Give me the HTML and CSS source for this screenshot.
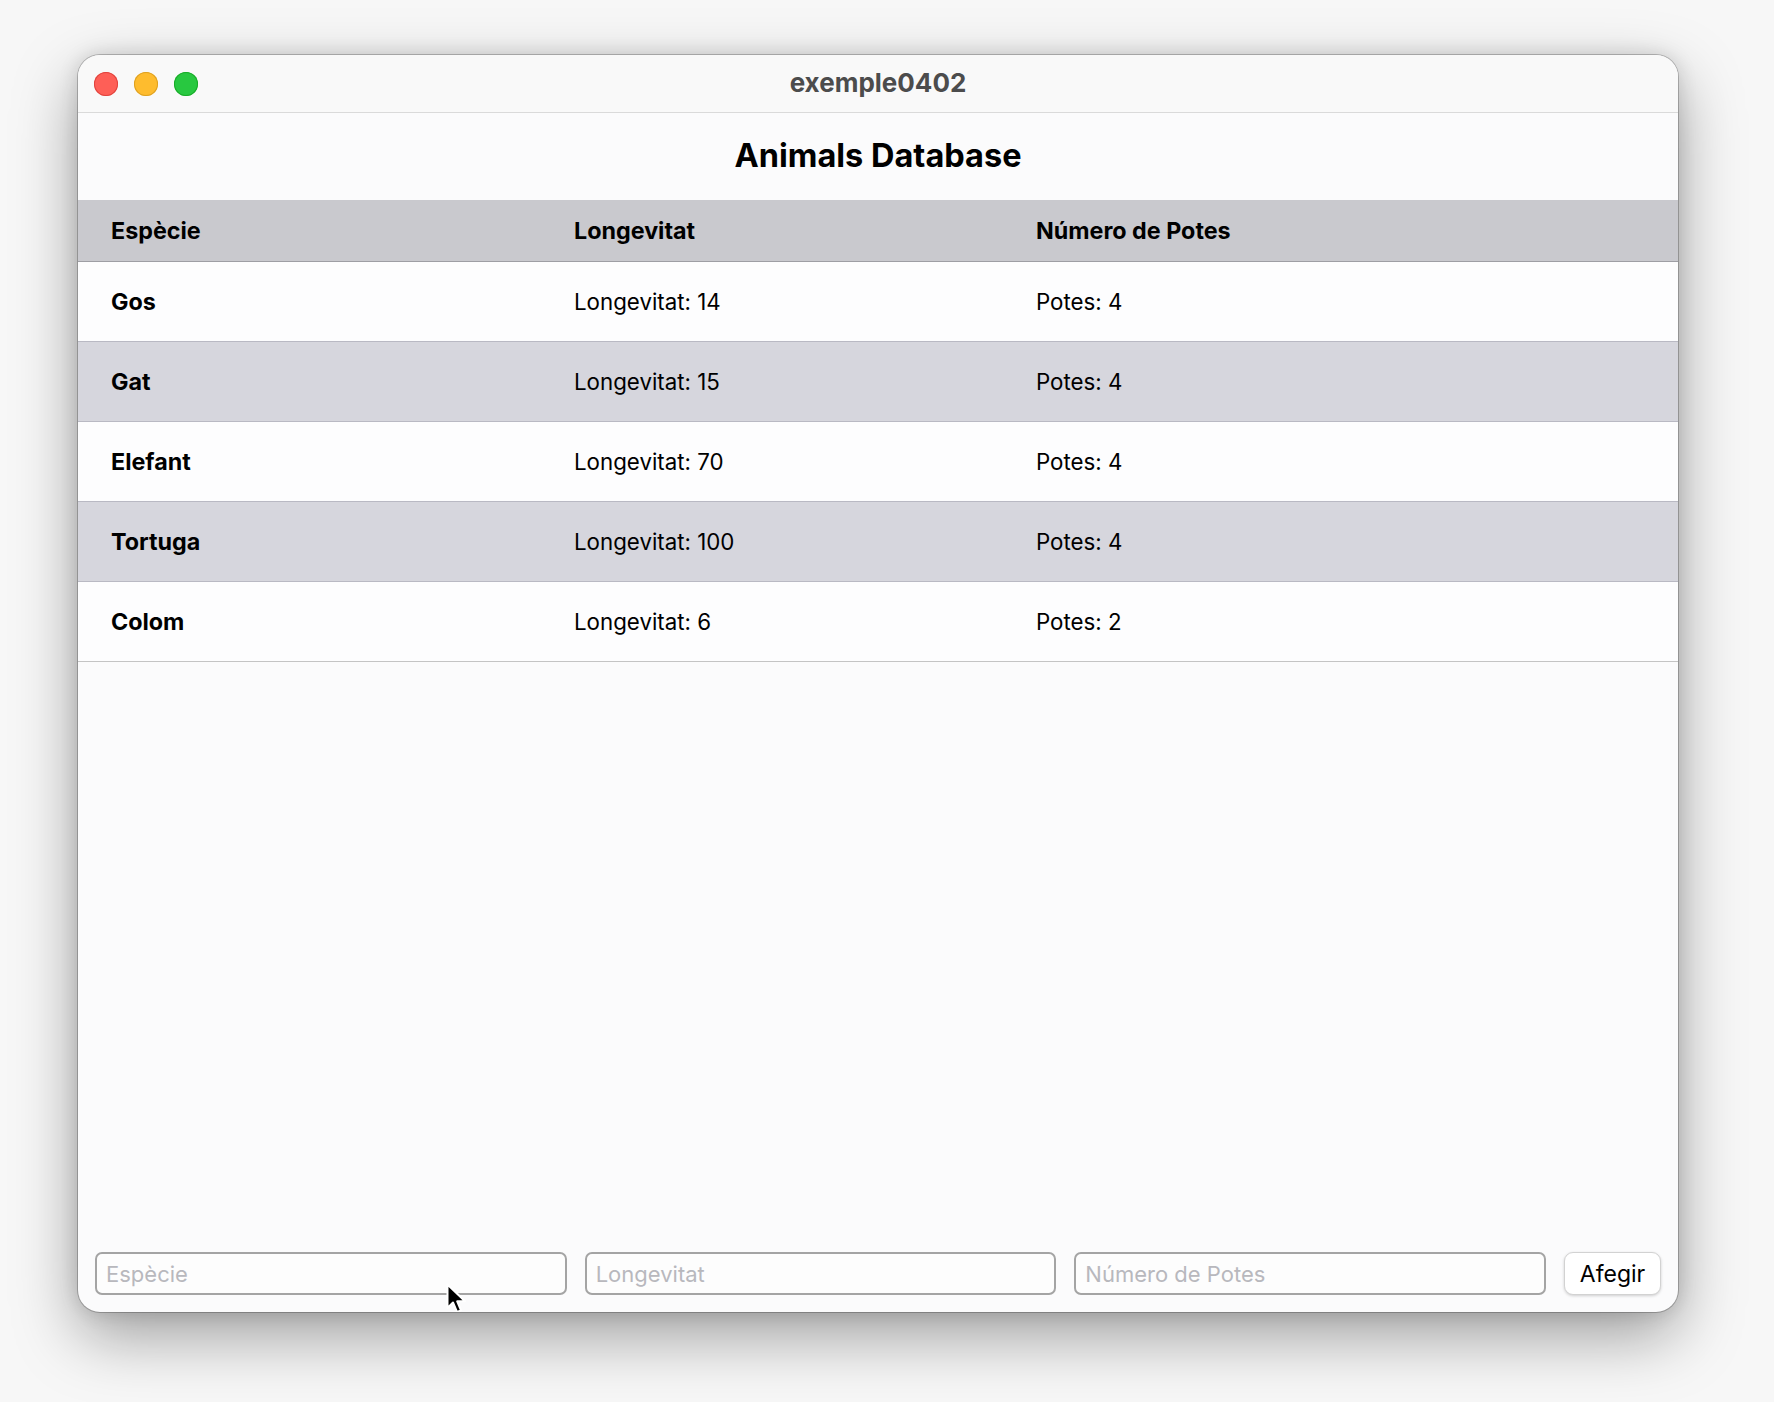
FILE: index.html
```html
<!DOCTYPE html>
<html lang="ca">
<head>
<meta charset="utf-8">
<title>exemple0402</title>
<link rel="stylesheet" href="styles.css">
</head>
<body>
<div class="window">
  <div class="titlebar">
    <div class="lights">
      <span class="light red"></span>
      <span class="light yellow"></span>
      <span class="light green"></span>
    </div>
    <div class="wtitle">exemple0402</div>
    <div></div>
  </div>
  <h1 class="apptitle">Animals Database</h1>
  <div class="table">
    <div class="row head">
      <div class="cell">Espècie</div>
      <div class="cell">Longevitat</div>
      <div class="cell">Número de Potes</div>
    </div>
    <div class="row">
      <div class="cell name">Gos</div>
      <div class="cell">Longevitat: 14</div>
      <div class="cell">Potes: 4</div>
    </div>
    <div class="row alt">
      <div class="cell name">Gat</div>
      <div class="cell">Longevitat: 15</div>
      <div class="cell">Potes: 4</div>
    </div>
    <div class="row">
      <div class="cell name">Elefant</div>
      <div class="cell">Longevitat: 70</div>
      <div class="cell">Potes: 4</div>
    </div>
    <div class="row alt">
      <div class="cell name">Tortuga</div>
      <div class="cell">Longevitat: 100</div>
      <div class="cell">Potes: 4</div>
    </div>
    <div class="row last">
      <div class="cell name">Colom</div>
      <div class="cell">Longevitat: 6</div>
      <div class="cell">Potes: 2</div>
    </div>
  </div>
  <div class="spacer"></div>
  <div class="form">
    <input class="field" type="text" placeholder="Espècie">
    <input class="field" type="text" placeholder="Longevitat">
    <input class="field" type="text" placeholder="Número de Potes">
    <button class="btn" type="button">Afegir</button>
  </div>
  <svg class="cursor" width="22" height="34" viewBox="0 0 22 34">
    <path d="M1.5 1.5 L1.5 25 L7 19.5 L11 29 L15 27.3 L11.2 18.3 L19 18.3 Z" fill="#000" stroke="#fff" stroke-width="2" stroke-linejoin="round"/>
  </svg>
</div>
</body>
</html>
```

FILE: styles.css
```css
* { box-sizing: border-box; }
html, body { margin: 0; padding: 0; }
body {
  background: #f7f7f7;
  font-family: Inter, "Noto Sans", "Liberation Sans", sans-serif;
  color: #000;
  width: 1774px;
  height: 1402px;
  overflow: hidden;
}
.window {
  position: relative;
  width: 1600px;
  height: 1257px;
  margin: 55px 0 0 78px;
  border-radius: 22px;
  background: #fbfbfc;
  box-shadow: 0 0 0 1px rgba(0,0,0,0.22), 0 24px 64px rgba(0,0,0,0.36), 0 0 20px rgba(0,0,0,0.14);
  display: flex;
  flex-direction: column;
  overflow: hidden;
}
.titlebar {
  height: 58px;
  flex: none;
  border-bottom: 1px solid #dadada;
  display: grid;
  grid-template-columns: 1fr auto 1fr;
  align-items: center;
  background: #f9f9f9;
}
.lights {
  display: flex;
  gap: 16px;
  padding-left: 16px;
}
.light {
  width: 24px;
  height: 24px;
  border-radius: 50%;
  display: block;
}
.red { background: #fe5f57; box-shadow: inset 0 0 0 1px #e0443e; }
.yellow { background: #febc2e; box-shadow: inset 0 0 0 1px #dea123; }
.green { background: #28c840; box-shadow: inset 0 0 0 1px #1aab29; }
.wtitle {
  font-size: 26px;
  font-weight: 700;
  color: #4c4c4c;
  padding-bottom: 2px;
}
.apptitle {
  margin: 0;
  height: 87px;
  flex: none;
  display: flex;
  align-items: center;
  justify-content: center;
  font-size: 32.5px;
  font-weight: 700;
  padding-bottom: 2px;
}
.table {
  flex: none;
  display: flex;
  flex-direction: column;
}
.row {
  display: grid;
  grid-template-columns: 462px 462px 1fr;
  padding-left: 33px;
  height: 80px;
  align-items: center;
  border-bottom: 1px solid #b9b9c3;
  background: #fdfdfe;
  font-size: 22.3px;
}
.row.head {
  height: 62px;
  background: #c9c9ce;
  border-bottom: 1px solid #9e9ea4;
  font-weight: 700;
  font-size: 23.3px;
}
.row.alt { background: #d6d6dd; }
.row.last { border-bottom-color: #c4c4c4; }
.cell.name { font-weight: 700; font-size: 23.3px; }
.row .cell:not(:first-child) { padding-left: 1px; }
.spacer { flex: 1; }
.form {
  flex: none;
  display: flex;
  gap: 18px;
  padding: 0 17px 17px 17px;
  align-items: center;
}
.field {
  flex: 1;
  height: 43px;
  border: 2px solid #a4a4a4;
  border-radius: 7px;
  background: #fdfdfd;
  font-family: Inter, "Noto Sans", "Liberation Sans", sans-serif;
  font-size: 22px;
  padding: 0 9px;
  color: #000;
  outline: none;
}
.field::placeholder { color: #b8b8bd; }
.btn {
  flex: none;
  width: 97px;
  height: 43px;
  border: 1px solid #d2d2d2;
  border-radius: 9px;
  background: #fff;
  box-shadow: 0 1px 3px rgba(0,0,0,0.18);
  font-family: Inter, "Noto Sans", "Liberation Sans", sans-serif;
  font-size: 23px;
  color: #000;
  padding: 0;
}
.cursor {
  position: absolute;
  left: 368px;
  top: 1228px;
}
```
